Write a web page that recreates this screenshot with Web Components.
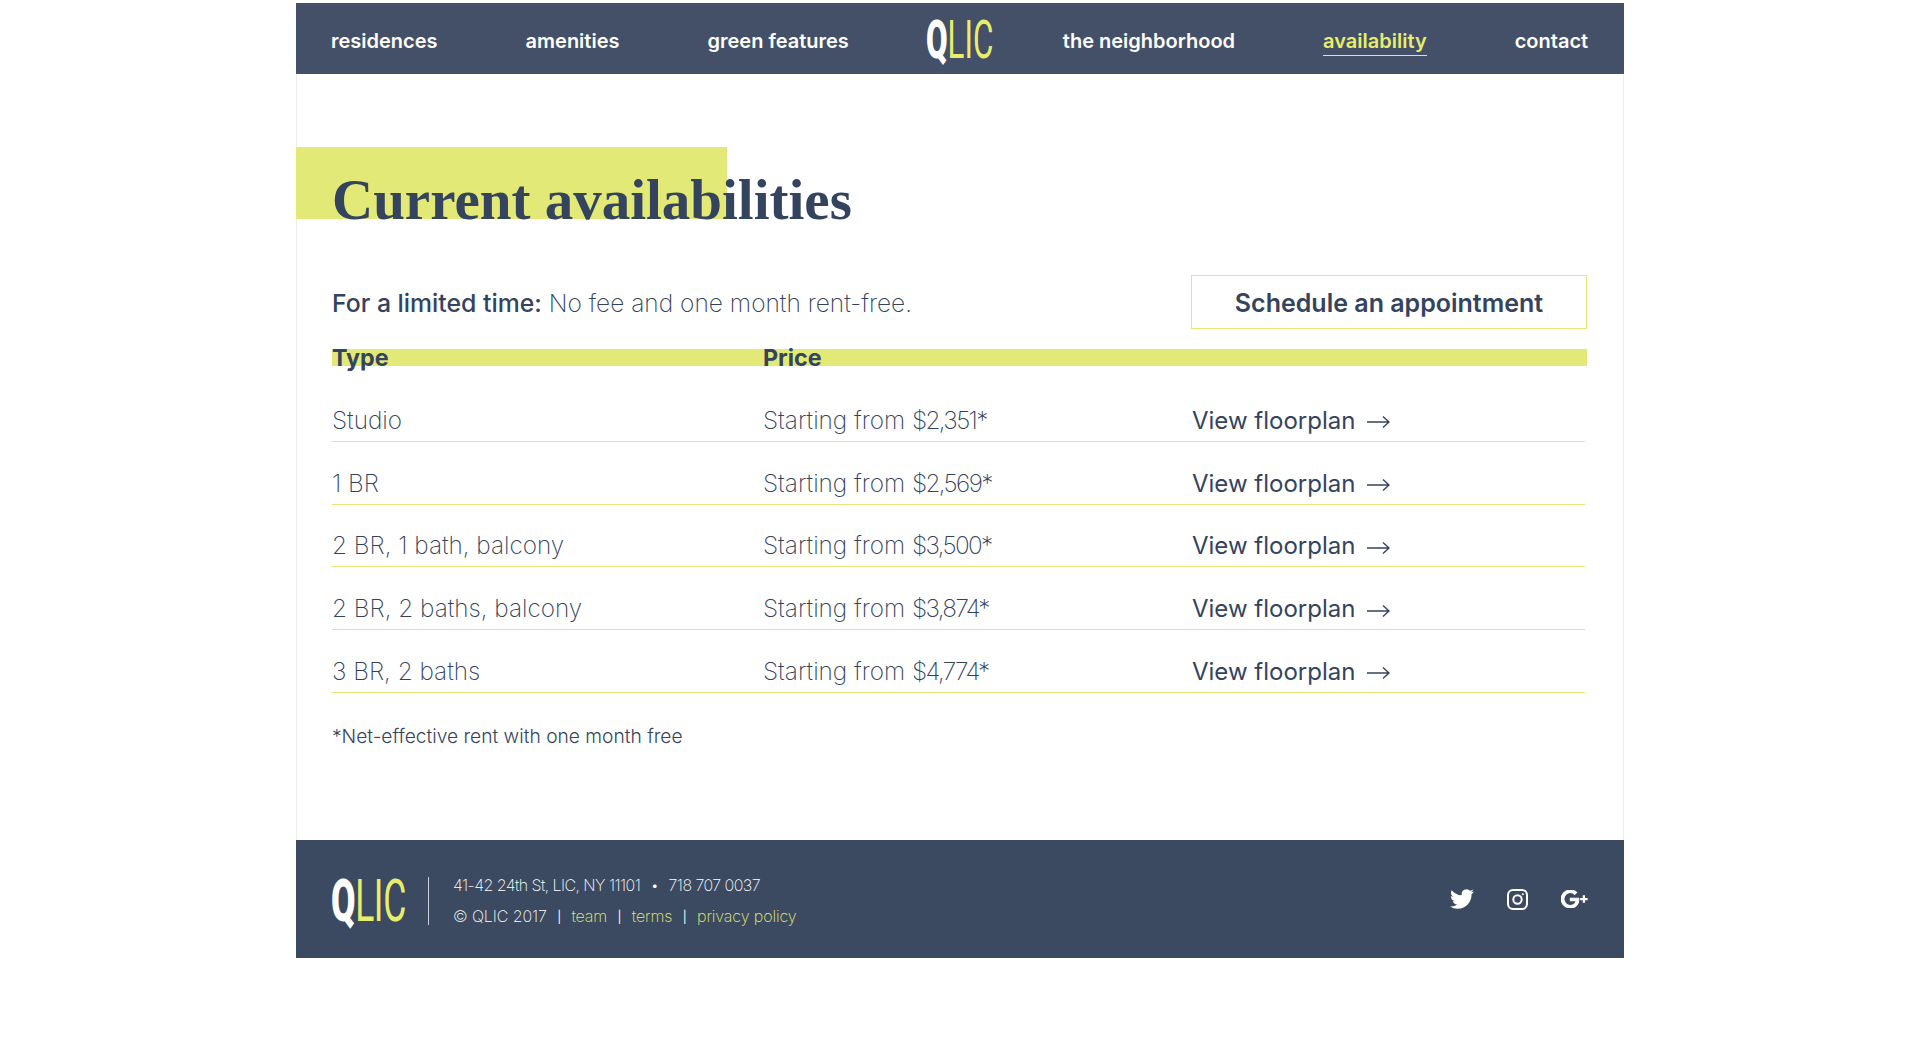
<!DOCTYPE html>
<html lang="en">
<head>
<meta charset="utf-8">
<title>QLIC - Current availabilities</title>
<style>
  html, body { margin: 0; background: #fff; }
  body { font-family: "Inter", "Liberation Sans", sans-serif; color: #34435e; }
</style>
</head>
<body>
<qlic-page>
  <qlic-nav slot="nav"></qlic-nav>
  <qlic-title slot="main">Current availabilities</qlic-title>
  <qlic-promo slot="main"><b slot="lead">For a limited time:</b> No fee and one month rent-free.</qlic-promo>
  <qlic-table slot="main">
    <qlic-row type="Studio" amount="$2,351*"></qlic-row>
    <qlic-row type="1 BR" amount="$2,569*"></qlic-row>
    <qlic-row type="2 BR, 1 bath, balcony" amount="$3,500*"></qlic-row>
    <qlic-row type="2 BR, 2 baths, balcony" amount="$3,874*"></qlic-row>
    <qlic-row type="3 BR, 2 baths" amount="$4,774*"></qlic-row>
  </qlic-table>
  <qlic-note slot="main">*Net-effective rent with one month free</qlic-note>
  <qlic-footer slot="footer"></qlic-footer>
</qlic-page>

<script>
const YELLOW = "#e3e977";

class QlicPage extends HTMLElement {
  connectedCallback() {
    this.attachShadow({ mode: "open" }).innerHTML = `
      <style>
        :host { display: block; width: 1328px; margin: 3px auto 0; box-sizing: border-box; }
        .frame { border: solid #eeeeee; border-width: 0 1px; }
        main { display: block; height: 766px; box-sizing: border-box; padding-top: 73px; }
      </style>
      <slot name="nav"></slot>
      <div class="frame"><main><slot name="main"></slot></main></div>
      <slot name="footer"></slot>
    `;
  }
}

class QlicLogo extends HTMLElement {
  connectedCallback() {
    const size = this.getAttribute("size") || 53;
    this.attachShadow({ mode: "open" }).innerHTML = `
      <style>
        :host { display: block; width: var(--w, 65px); line-height: 1; }
        div {
          font: 400 ${size}px/1 "Roboto", "Liberation Sans", sans-serif;
          white-space: nowrap; transform: scaleX(var(--sx, .59)); transform-origin: 0 50%;
          color: #e8ee6b;
        }
        b { color: #fff; font-weight: 900; }
      </style>
      <div><b>Q</b><span>LIC</span></div>
    `;
  }
}

class QlicNav extends HTMLElement {
  connectedCallback() {
    const link = (text, active) => `<a class="${active ? "on" : ""}">${text}</a>`;
    this.attachShadow({ mode: "open" }).innerHTML = `
      <style>
        :host { display: block; }
        nav {
          display: flex; align-items: center; gap: 88px; height: 71px; box-sizing: border-box;
          padding: 0 36px 0 35px; background: #435067; color: #fff;
          font: 600 20px/24px "Inter", "Liberation Sans", sans-serif;
        }
        a { display: block; padding-bottom: 2px; border-bottom: 1px solid transparent; margin-top: 7px; white-space: nowrap; }
        a.on { color: #e8ee6b; border-color: #e8ee6b; }
        qlic-logo { margin: 3px -16px 0 -11px; }
      </style>
      <nav>
        ${link("residences")}${link("amenities")}${link("green features")}
        <qlic-logo></qlic-logo>
        ${link("the neighborhood")}${link("availability", true)}${link("contact")}
      </nav>
    `;
  }
}

class QlicTitle extends HTMLElement {
  connectedCallback() {
    this.attachShadow({ mode: "open" }).innerHTML = `
      <style>
        :host {
          display: block; height: 72px; box-sizing: border-box; margin-left: -1px; padding-left: 36px;
          background: linear-gradient(${YELLOW}, ${YELLOW}) 0 0 / 431px 72px no-repeat;
        }
        h1 {
          margin: 0; padding-top: 21px;
          font: 700 57px/64px "Liberation Serif", serif; color: #34435e; white-space: nowrap;
        }
      </style>
      <h1><slot></slot></h1>
    `;
  }
}

class QlicPromo extends HTMLElement {
  connectedCallback() {
    this.attachShadow({ mode: "open" }).innerHTML = `
      <style>
        :host {
          display: flex; align-items: center; justify-content: space-between;
          margin: 56px 36px 0 35px; height: 54px;
          font: 200 24.5px/30px "Inter", "Liberation Sans", sans-serif; color: #33425c;
        }
        div { padding-top: 1px; }
        ::slotted(b) { font-weight: 500; font-size: 24.8px; color: #34435e; }
        a {
          display: flex; align-items: center; justify-content: center; box-sizing: border-box;
          width: 396px; height: 54px; padding-top: 2px; border: 1.5px solid ${YELLOW};
          font-weight: 600; font-size: 25px; color: #34435e;
        }
      </style>
      <div><slot name="lead"></slot><slot></slot></div>
      <a>Schedule an appointment</a>
    `;
  }
}

class QlicTable extends HTMLElement {
  connectedCallback() {
    this.attachShadow({ mode: "open" }).innerHTML = `
      <style>
        :host { display: block; margin: 20px 36px 0 35px; }
        header {
          display: grid; grid-template-columns: 431px 1fr; height: 17px; background: ${YELLOW};
          font: 700 23.3px/17px "Inter", "Liberation Sans", sans-serif; color: #34435e;
          margin-bottom: 13px;
        }
        ::slotted(qlic-row) { margin-right: 2px; }
      </style>
      <header><span>Type</span><span>Price</span></header>
      <slot></slot>
    `;
  }
}

class QlicRow extends HTMLElement {
  connectedCallback() {
    this.attachShadow({ mode: "open" }).innerHTML = `
      <style>
        :host {
          display: grid; grid-template-columns: 431px 429px 1fr; align-items: center;
          height: 62.75px; box-sizing: border-box; padding-top: 22px;
          border-bottom: 1.5px solid ${YELLOW};
          font: 200 24.3px/30px "Inter", "Liberation Sans", sans-serif; color: #33425c;
        }
        span { margin-top: -2px; }
        b { font-weight: inherit; letter-spacing: -1.6px; }
        a { display: flex; align-items: center; gap: 12px; font-weight: 400; color: #34435e; font-size: 24px; }
        svg { width: 23px; height: 14px; margin-top: 3px; }
      </style>
      <span>${this.getAttribute("type")}</span>
      <span>Starting from <b>${this.getAttribute("amount")}</b></span>
      <a>View floorplan
        <svg viewBox="0 0 23 14" fill="none" stroke="#34435e" stroke-width="1.4">
          <path d="M0 7h22M16 1.500 22 7l-6 5.500"/>
        </svg>
      </a>
    `;
  }
}

class QlicNote extends HTMLElement {
  connectedCallback() {
    this.attachShadow({ mode: "open" }).innerHTML = `
      <style>
        :host {
          display: block; margin: 30px 0 0 35px;
          font: 300 19.2px/26px "Inter", "Liberation Sans", sans-serif; color: #34435e;
        }
      </style>
      <slot></slot>
    `;
  }
}

class QlicFooter extends HTMLElement {
  connectedCallback() {
    this.attachShadow({ mode: "open" }).innerHTML = `
      <style>
        :host { display: block; }
        footer {
          display: flex; align-items: center; height: 118px; box-sizing: border-box;
          padding: 0 36px 0 35px; background: #3b4a61; color: #ffffff;
          font: 200 16px/31px "Inter", "Liberation Sans", sans-serif; letter-spacing: -.55px;
        }
        qlic-logo { --w: 74px; margin-top: 4px; }
        .rule { width: 1px; height: 48px; background: #ccd0d7; margin: 4px 24px 0 23px; }
        .info { flex: 1; white-space: nowrap; padding-top: 4px; }
        .info div { height: 31px; }
        .info div + div { letter-spacing: -.1px; }
        a { color: #e8ee6b; }
        i { font-style: normal; margin: 0 6px; }
        i.bar { font-size: 12px; font-weight: 400; position: relative; top: -1px; }
        .social { display: flex; align-items: center; gap: 33px; }
        svg { display: block; fill: #fff; }
      </style>
      <footer>
        <qlic-logo size="60"></qlic-logo>
        <div class="rule"></div>
        <div class="info">
          <div>41-42 24th St, LIC, NY 11101 <i>•</i> 718 707 0037</div>
          <div>© QLIC 2017 <i class="bar">|</i> <a>team</a> <i class="bar">|</i> <a>terms</a> <i class="bar">|</i> <a>privacy policy</a></div>
        </div>
        <div class="social">
          <svg width="24" height="24" viewBox="0 0 24 24"><path d="M23.953 4.57a10 10 0 01-2.825.775 4.958 4.958 0 002.163-2.723c-.951.555-2.005.959-3.127 1.184a4.92 4.92 0 00-8.384 4.482C7.69 8.095 4.067 6.13 1.64 3.162a4.822 4.822 0 00-.666 2.475c0 1.71.87 3.213 2.188 4.096a4.904 4.904 0 01-2.228-.616v.06a4.923 4.923 0 003.946 4.827 4.996 4.996 0 01-2.212.085 4.936 4.936 0 004.604 3.417 9.867 9.867 0 01-6.102 2.105c-.39 0-.779-.023-1.17-.067a13.995 13.995 0 007.557 2.209c9.053 0 13.998-7.496 13.998-13.985 0-.21 0-.42-.015-.63A9.935 9.935 0 0024 4.59z"/></svg>
          <svg width="21" height="21" viewBox="0 0 21 21" style="fill:none;stroke:#fff;stroke-width:2"><rect x="1" y="1" width="19" height="19" rx="5"/><circle cx="10.5" cy="10.5" r="4.2"/><circle cx="15.800" cy="5.200" r=".6" style="fill:#fff;stroke-width:1"/></svg>
          <svg width="27" height="18" viewBox="0 0 36 24"><path d="M12.48 10.92v3.28h7.84c-.24 1.84-.853 3.187-1.787 4.133-1.147 1.147-2.933 2.4-6.053 2.4-4.827 0-8.6-3.893-8.6-8.72s3.773-8.72 8.6-8.72c2.6 0 4.507 1.027 5.907 2.347l2.307-2.307C18.747 1.44 16.133 0 12.48 0 5.867 0 .307 5.387.307 12s5.56 12 12.173 12c3.573 0 6.267-1.173 8.373-3.36 2.16-2.16 2.84-5.213 2.84-7.667 0-.76-.053-1.467-.173-2.053H12.48z" stroke="#fff" stroke-width="1.5"/><path d="M29 7h3v3.500h3.500v3H32V17h-3v-3.500h-3.500v-3H29z"/></svg>
        </div>
      </footer>
    `;
  }
}

customElements.define("qlic-page", QlicPage);
customElements.define("qlic-logo", QlicLogo);
customElements.define("qlic-nav", QlicNav);
customElements.define("qlic-title", QlicTitle);
customElements.define("qlic-promo", QlicPromo);
customElements.define("qlic-table", QlicTable);
customElements.define("qlic-row", QlicRow);
customElements.define("qlic-note", QlicNote);
customElements.define("qlic-footer", QlicFooter);
</script>
</body>
</html>
